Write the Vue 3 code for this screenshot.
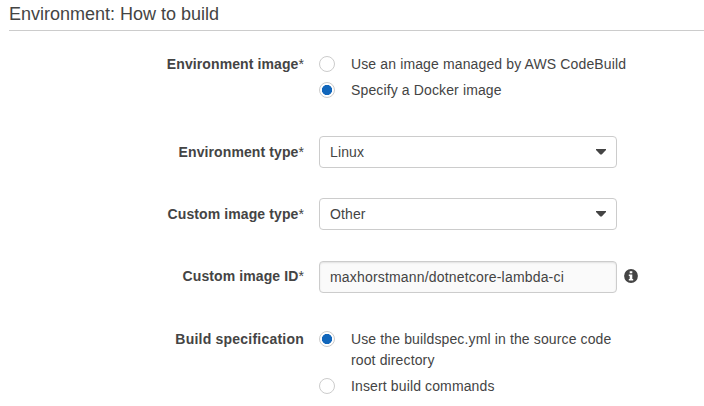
<script setup>
import { ref } from 'vue'

const imageSource = ref('docker')
const envType = ref('Linux')
const imageType = ref('Other')
const imageId = ref('maxhorstmann/dotnetcore-lambda-ci')
const buildSpec = ref('file')
</script>

<template>
  <main class="page">
    <h2 class="heading">Environment: How to build</h2>
    <form class="form">
      <div class="row">
        <div class="label">Environment image<span class="req">*</span></div>
        <div class="options">
          <label class="option"><input v-model="imageSource" type="radio" name="image" value="managed" /><span>Use an image managed by AWS CodeBuild</span></label>
          <label class="option"><input v-model="imageSource" type="radio" name="image" value="docker" /><span>Specify a Docker image</span></label>
        </div>
      </div>
      <div class="row field type">
        <label class="label" for="env-type">Environment type<span class="req">*</span></label>
        <div class="select">
          <select id="env-type" v-model="envType"><option>Linux</option></select>
          <svg class="caret" width="10" height="6" viewBox="0 0 10 6"><path d="M0 0H10V1L5.7 5.5H4.3L0 1Z" fill="#444" /></svg>
        </div>
      </div>
      <div class="row field custom">
        <label class="label" for="image-type">Custom image type<span class="req">*</span></label>
        <div class="select">
          <select id="image-type" v-model="imageType"><option>Other</option></select>
          <svg class="caret" width="10" height="6" viewBox="0 0 10 6"><path d="M0 0H10V1L5.7 5.5H4.3L0 1Z" fill="#444" /></svg>
        </div>
      </div>
      <div class="row field ident">
        <label class="label" for="image-id">Custom image ID<span class="req">*</span></label>
        <input id="image-id" v-model="imageId" class="text" type="text" />
        <svg class="info" width="14" height="14" viewBox="0 0 14 14">
          <circle cx="7" cy="7" r="6.9" fill="#444" />
          <path d="M5.7 2.2H8.3V4.3H5.7ZM4.8 5.4H8.3V9.9H9.2V11.5H4.8V9.9H5.7V7H4.8Z" fill="#fff" />
        </svg>
      </div>
      <div class="row spec">
        <div class="label">Build specification</div>
        <div class="options">
          <label class="option"><input v-model="buildSpec" type="radio" name="spec" value="file" /><span>Use the buildspec.yml in the source code root directory</span></label>
          <label class="option"><input v-model="buildSpec" type="radio" name="spec" value="inline" /><span>Insert build commands</span></label>
        </div>
      </div>
    </form>
  </main>
</template>

<style>
body {
  background: #fff;
  overflow: hidden;
}
</style>

<style scoped>
.page {
  box-sizing: border-box;
  height: 406px;
  padding-left: 9px;
  overflow: hidden;
  color: #444;
  font: 14px/21px "Liberation Sans", Arial, sans-serif;
  letter-spacing: 0.13px;
}
.heading {
  box-sizing: border-box;
  height: 31px;
  margin: 0;
  padding-top: 2px;
  border-bottom: 1px solid #ccc;
  font-size: 18px;
  font-weight: 400;
  line-height: 24px;
  letter-spacing: 0;
}
.form {
  padding-top: 23px;
}
.row {
  display: flex;
}
.label {
  flex: none;
  width: 295px;
  margin-right: 15px;
  font-weight: 700;
  text-align: right;
  letter-spacing: 0.1px;
}
.req {
  font-weight: 400;
}
.options {
  display: flex;
  flex-direction: column;
  gap: 5px;
  width: 310px;
}
.option {
  display: flex;
  gap: 16px;
}
.option input {
  appearance: none;
  box-sizing: border-box;
  flex: none;
  width: 16px;
  height: 16px;
  margin: 2px 0 0;
  border: 1px solid #ccc;
  border-radius: 50%;
  background: #fff;
}
.option input:checked {
  background: radial-gradient(circle, #1166bb 4.8px, #fff 5.4px);
}
.field {
  align-items: center;
}
.type {
  margin-top: 35px;
}
.custom {
  margin-top: 30px;
}
.ident {
  margin-top: 31px;
}
.ident .label,
.info {
  margin-bottom: 2px;
}
.spec {
  margin-top: 36px;
}
.spec .label {
  letter-spacing: 0.22px;
}
.spec .options {
  width: 298px;
}
.select {
  display: grid;
  align-items: center;
  width: 298px;
}
.select select,
.text {
  appearance: none;
  box-sizing: border-box;
  width: 298px;
  height: 32px;
  margin: 0;
  padding: 0 10px;
  border: 1px solid #ccc;
  border-radius: 4px;
  background: #fff;
  color: #444;
  font: inherit;
  letter-spacing: inherit;
}
.select select,
.caret {
  grid-area: 1 / 1;
}
.caret {
  justify-self: end;
  margin-right: 11px;
  pointer-events: none;
}
.text {
  background: #fafafa;
  box-shadow: inset 0 1px 2px rgba(0, 0, 0, 0.1);
  letter-spacing: 0.18px;
}
.info {
  margin-left: 7px;
}
</style>
